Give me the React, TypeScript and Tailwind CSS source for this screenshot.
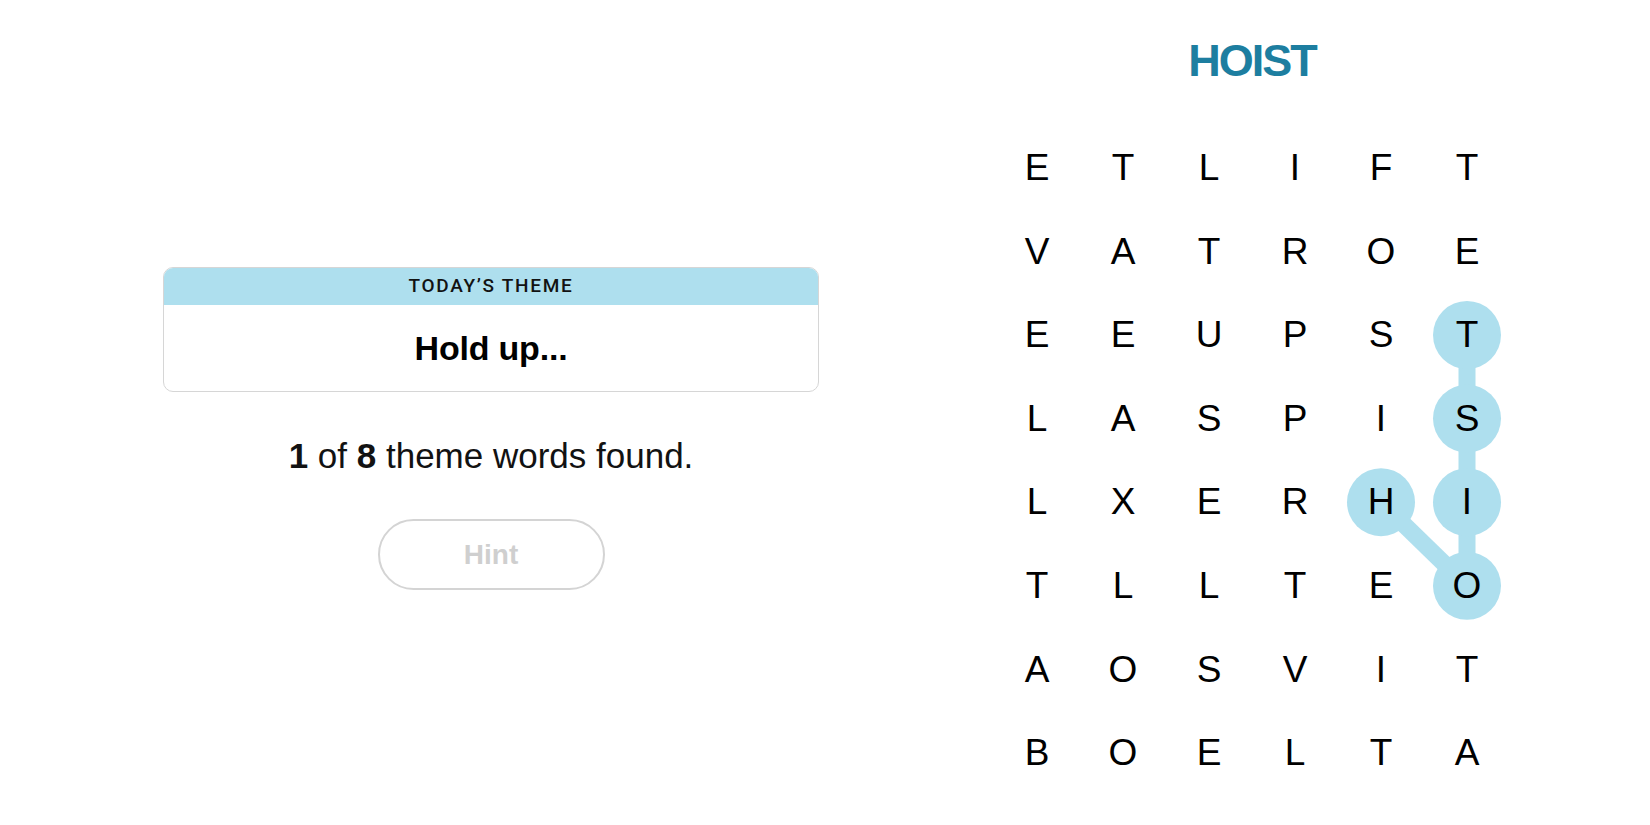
import React from 'react';

const GRID: string[] = [
  'ETLIFT',
  'VATROE',
  'EEUPST',
  'LASPIS',
  'LXERHI',
  'TLLTEO',
  'AOSVIT',
  'BOELTA',
];

const CELL_W = 86;
const CELL_H = 83.6;

// found word path: H -> O -> I -> S -> T
const FOUND: [number, number][] = [
  [4, 4],
  [5, 5],
  [4, 5],
  [3, 5],
  [2, 5],
];

const ThemeCard: React.FC = () => (
  <div className="w-[656px] rounded-[10px] border border-[#d6d6d6] overflow-hidden bg-white">
    <div className="h-[37px] bg-[#aedfee] flex items-center justify-center">
      <span className="text-[19px] font-medium tracking-[1.7px] text-[#121212] uppercase font-['Roboto',sans-serif]">
        Today’s Theme
      </span>
    </div>
    <div className="h-[86px] flex items-center justify-center">
      <span className="text-[34px] font-bold text-black tracking-[-0.2px]">Hold up...</span>
    </div>
  </div>
);

const Board: React.FC = () => {
  const cx = (c: number) => c * CELL_W + CELL_W / 2;
  const cy = (r: number) => r * CELL_H + CELL_H / 2;
  return (
    <div className="relative w-[516px]">
      <svg className="absolute inset-0 pointer-events-none" width={516} height={CELL_H * 8}>
        {FOUND.slice(1).map(([r, c], i) => {
          const [pr, pc] = FOUND[i];
          return (
            <line key={i} x1={cx(pc)} y1={cy(pr)} x2={cx(c)} y2={cy(r)} stroke="#aedfee" strokeWidth={17} />
          );
        })}
        {FOUND.map(([r, c], i) => (
          <circle key={i} cx={cx(c)} cy={cy(r)} r={34} fill="#aedfee" />
        ))}
      </svg>
      <div className="relative grid grid-cols-6">
        {GRID.map((row, r) =>
          row.split('').map((ch, c) => (
            <div key={`${r}-${c}`} className="w-[86px] h-[83.6px] flex items-center justify-center text-[37px] text-black">
              {ch}
            </div>
          ))
        )}
      </div>
    </div>
  );
};

const App: React.FC = () => {
  return (
    <div
      className="w-[1650px] h-[825px] bg-white flex overflow-hidden"
      style={{ fontFamily: '"Liberation Sans", Arial, sans-serif' }}
    >
      {/* left side: theme + progress */}
      <div className="w-[656px] ml-[163px] mt-[267px] flex flex-col items-center">
        <ThemeCard />
        <p className="mt-[46px] text-[35px] text-[#121212] leading-none">
          <span className="font-bold">1</span> of <span className="font-bold">8</span> theme words found.
        </p>
        <button className="mt-[46px] w-[227px] h-[71px] rounded-full border-2 border-[#d4d4d4] text-[#cfcfcf] text-[28px] font-bold">
          Hint
        </button>
      </div>

      {/* right side: board */}
      <div className="ml-[175px] flex flex-col items-center">
        <h1 className="mt-[34px] h-[54px] text-[45px] leading-[54px] font-bold text-[#1d7ea0] tracking-[-2px]">HOIST</h1>
        <div className="mt-[38px]">
          <Board />
        </div>
      </div>
    </div>
  );
};

export default App;
